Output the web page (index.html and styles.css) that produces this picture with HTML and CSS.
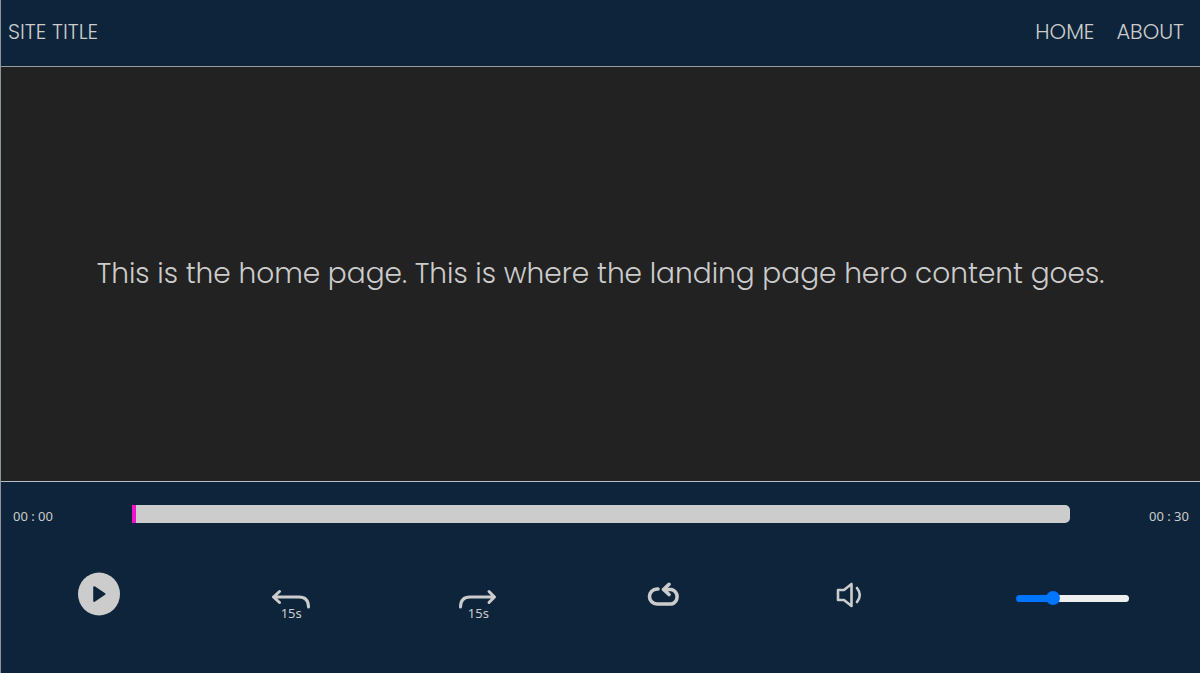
FILE: index.html
```html
<!DOCTYPE html>
<html lang="en">
<head>
<meta charset="utf-8">
<meta name="viewport" content="width=device-width, initial-scale=1">
<title>Site Title</title>
<link rel="stylesheet" href="styles.css">
</head>
<body class="page">
<header class="header">
  <a class="nav-link" href="#">SITE TITLE</a>
  <nav class="nav">
    <a class="nav-link" href="#">HOME</a>
    <a class="nav-link" href="#about">ABOUT</a>
  </nav>
</header>
<main class="hero">
  <p class="hero-text">This is the home page. This is where the landing page hero content goes.</p>
</main>
<footer class="player">
  <div class="timeline">
    <span class="time">00 : 00</span>
    <input class="seek" type="range" min="0" max="30" value="0" aria-label="Seek">
    <span class="time time-end">00 : 30</span>
  </div>
  <div class="controls">
    <button class="control play" type="button" aria-label="Play">
      <svg width="42" height="44" viewBox="0 0 42 44"><ellipse cx="21" cy="22" rx="21" ry="21.5" fill="#ccc"/><path d="M16.200 15.200 L26.500 22 L16.200 29 Z" fill="#0d243a" stroke="#0d243a" stroke-width="2" stroke-linejoin="round"/></svg>
    </button>
    <button class="control skip" type="button" aria-label="Back 15 seconds">
      <svg class="stroke-icon" width="38" height="20" viewBox="0 0 38 20"><path d="M7.500 2.500 L1.500 8 L7.500 13.500 M2 8 H27 Q36.500 8 36.500 18"/></svg>
      <span class="skip-label">15s</span>
    </button>
    <button class="control skip" type="button" aria-label="Forward 15 seconds">
      <svg class="stroke-icon" width="38" height="20" viewBox="0 0 38 20"><path d="M30 2.500 L35.500 8 L30 13.500 M35 8 H11 Q1.500 8 1.500 18"/></svg>
      <span class="skip-label">15s</span>
    </button>
    <button class="control loop" type="button" aria-label="Repeat">
      <svg class="stroke-icon" width="34" height="26" viewBox="0 0 34 26"><path stroke-width="3.600" d="M11 7 H10 A7.500 7.500 0 0 0 10 22 H24.500 A7.500 7.500 0 0 0 24.500 7.500 H17.500 M22 2.300 L16.500 7.500 L22 12.500"/></svg>
    </button>
    <button class="control volume-button" type="button" aria-label="Mute">
      <svg class="volume-icon" width="26" height="26" viewBox="0 0 26 26"><path d="M2 8 H8 L15.500 2 V24 L8 18 H2 Z M21 6 Q26.500 13 21 20"/></svg>
    </button>
    <input class="volume" type="range" min="0" max="100" value="30" aria-label="Volume">
  </div>
</footer>
</body>
</html>
```

FILE: styles.css
```css
* { box-sizing: border-box; }

.page {
  position: relative;
  display: flex;
  flex-direction: column;
  min-height: 100vh;
  margin: 0;
  border-left: 1px solid #8d949b;
  background: #222;
  color: #ccc;
  font-family: Poppins, Inter, sans-serif;
  font-weight: 300;
}

/* dark break in the left edge line */
.page::before {
  content: "";
  position: absolute;
  top: 415px;
  left: -1px;
  width: 1px;
  height: 26px;
  background: #111;
}

.header {
  display: flex;
  justify-content: space-between;
  align-items: center;
  padding: 16px 16px 18px 7px;
  border-bottom: 1px solid #9a9da0;
  background: #0d243a;
}

.nav { display: flex; gap: 22px; }

.nav-link {
  color: #ccc;
  font-size: 21px;
  line-height: 32px;
  text-decoration: none;
}

.hero {
  flex: 1;
  display: flex;
  align-items: center;
  justify-content: center;
}

.hero-text {
  margin: 0;
  font-size: 28px;
  line-height: 44px;
  text-align: center;
}

.player {
  padding: 22px 0 52px;
  border-top: 1px solid #b9bcc0;
  background: #0d243a;
}

.timeline {
  display: grid;
  grid-template-columns: 119px 1fr 119px;
  align-items: center;
  padding: 0 11px 0 12px;
}

.time {
  padding-top: 4px;
  font-family: "Noto Sans", sans-serif;
  font-size: 13px;
  font-weight: 400;
  line-height: 16px;
}

.time-end { text-align: right; }

.seek,
.volume {
  -webkit-appearance: none;
  appearance: none;
  margin: 0;
}

.seek {
  width: 100%;
  height: 18px;
  border-radius: 0 5px 5px 0;
  background: #ccc;
  overflow: hidden;
}

.seek::-webkit-slider-thumb {
  -webkit-appearance: none;
  width: 4px;
  height: 18px;
  background: #ee12cc;
}

.controls {
  display: flex;
  justify-content: space-between;
  align-items: flex-start;
  padding: 48px 71px 0 77px;
}

.control {
  display: flex;
  flex-direction: column;
  padding: 0;
  border: 0;
  background: none;
  color: #ccc;
}

.play { width: 45px; }
.skip { width: 38px; margin-top: 17px; }
.loop { width: 40px; margin-top: 10px; }
.volume-button { width: 31px; margin-top: 10px; }

.stroke-icon,
.volume-icon {
  fill: none;
  stroke: #ccc;
  stroke-width: 3;
  stroke-linecap: round;
  stroke-linejoin: round;
}

.volume-icon { stroke-width: 2.600; }

.skip-label {
  align-self: center;
  margin-top: -4px;
  font-family: "Noto Sans", sans-serif;
  font-size: 13px;
  font-weight: 400;
  line-height: 16px;
}

.volume {
  width: 113px;
  height: 14px;
  margin-top: 19px;
  background: transparent;
}

.volume::-webkit-slider-runnable-track {
  height: 7px;
  border-radius: 4px;
  background: linear-gradient(to right, #0075ff 33%, #efefef 33%);
}

.volume::-webkit-slider-thumb {
  -webkit-appearance: none;
  width: 14px;
  height: 14px;
  margin-top: -4px;
  border-radius: 50%;
  background: #0075ff;
}
```
